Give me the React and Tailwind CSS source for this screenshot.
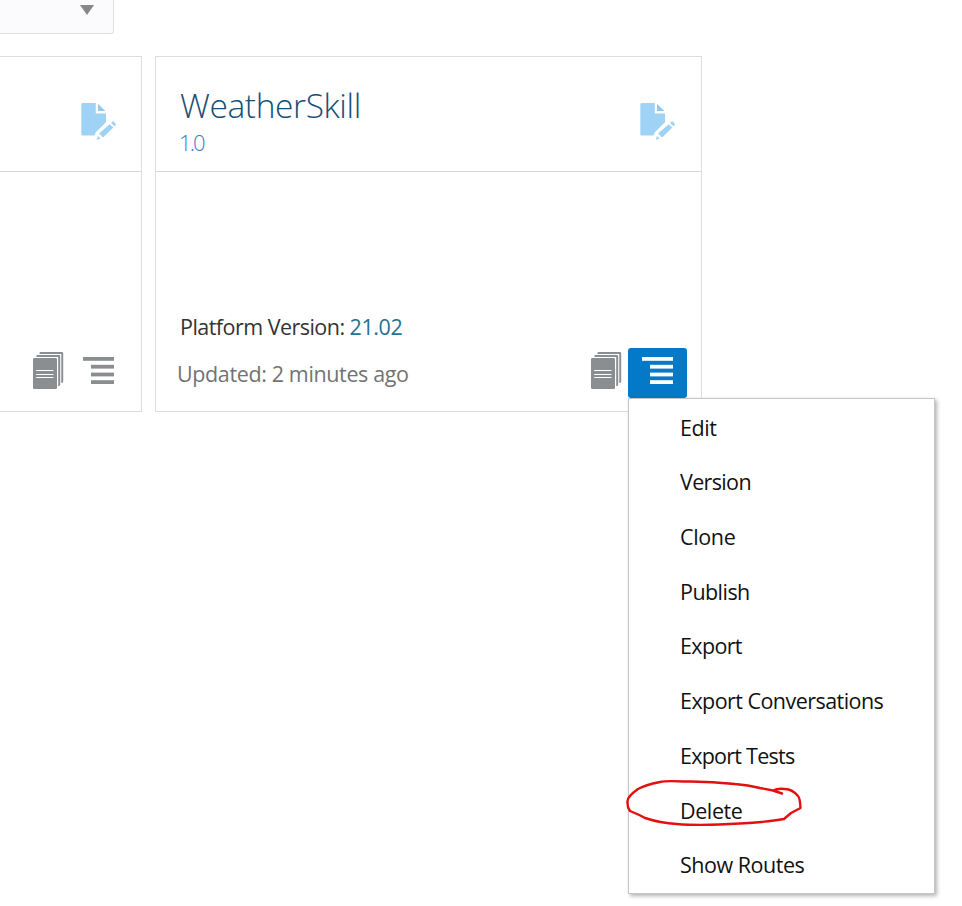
const FONT = "font-['Open_Sans','Noto_Sans',sans-serif]";

function DraftIcon() {
  return (
    <svg className="block h-[38px] w-[36px] shrink-0" viewBox="0 0 36 38" fill="#9fd3f5">
      <path d="M1.5 0H14.8V10.5H25V19.2L14.8 29.2L13.6 32.5H1.5Q.3 32.5 .3 31.3V1.2Q.3 0 1.5 0Z" />
      <path d="M17 .8L24.3 8H17Z" fill="#93c8ea" />
      <path d="M28.7 21.2L32.3 24.6L22.2 34.4L18 30.6Z" />
      <path d="M30 19.8L31.6 18.4Q32.1 18 32.6 18.5L34.8 20.8Q35.2 21.3 34.7 21.9L33.4 23.2Z" />
      <path d="M17 33L19.6 35.5L15.7 37Z" />
    </svg>
  );
}

function VersionsIcon() {
  return (
    <svg className="block h-[38px] w-[31px] shrink-0" viewBox="0 0 31 38">
      <g fill="#8a8e90">
        <path d="M6.5 .9Q6.5 0 7.5 0H29Q30.2 0 30.2 1.2V29.5Q30.2 31 28.3 31V1.9H6.5Z" />
        <path d="M3.4 3.9Q3.4 3 4.4 3H26Q27.2 3 27.2 4.2V32.8Q27.2 34.2 25.2 34.2V4.9H3.4Z" />
        <rect x="0" y="6" width="24" height="31" rx="1.2" />
      </g>
      <path d="M3.2 18.5H20.4M3.2 22.5H20.4M3.2 25.5H20.4" stroke="#fff" strokeWidth="1.2" />
    </svg>
  );
}

function MenuIcon() {
  return (
    <svg className="block h-[27px] w-[31px] shrink-0" viewBox="0 0 31 27" fill="currentColor">
      <rect x="0" y="0" width="31" height="3.8" />
      <rect x="8" y="7.8" width="23" height="3.8" />
      <rect x="8" y="15.6" width="23" height="3.8" />
      <rect x="8" y="23.2" width="23" height="3.8" />
    </svg>
  );
}

const items = [
  ["Edit", "tracking-[-0.45px]"],
  ["Version", "tracking-[-0.65px]"],
  ["Clone", "tracking-[-0.35px]"],
  ["Publish", "tracking-[-0.55px]"],
  ["Export", "tracking-[-0.65px]"],
  ["Export Conversations", "tracking-[-0.55px]"],
  ["Export Tests", "tracking-[-0.75px]"],
  ["Delete", "tracking-[-0.4px]"],
  ["Show Routes", "tracking-[-0.48px]"],
];

function ActionMenu() {
  return (
    <div className="absolute top-[50px] left-0 z-10 h-[496px] w-[307px] border border-[#c4c6c8] bg-white pt-[1.4px] shadow-[2px_2px_4px_rgba(0,0,0,0.3)]">
      <ul>
        {items.map(([label, tracking]) => (
          <li key={label} className="flex h-[54.7px] items-center pl-[51px] text-[21.5px] leading-[30px] whitespace-nowrap text-[#111]">
            <span className={tracking}>{label}</span>
          </li>
        ))}
      </ul>
      <svg className="pointer-events-none absolute top-[378px] left-[-7px] h-[54px] w-[184px]" viewBox="622 777 184 54" fill="none" stroke="#e60f0f" strokeWidth="2.4" strokeLinecap="round" strokeLinejoin="round">
        <path d="M782 793.5L773 790.5L760 788Q748 785 735 784Q708 781 684 781.5Q666 780.5 660 782Q645 785 638 789Q628 796 627.5 801Q627 807 630 811Q640 815 645 818Q660 823 677 824Q700 826 740 823.5Q768 822 784 819L791 813L800.5 808Q800 798 798 796Q792 789 785 789Q778 788 773 790.5" />
      </svg>
    </div>
  );
}

export default function App() {
  return (
    <main className={`h-[906px] w-[962px] overflow-hidden bg-white ${FONT}`}>
      <div className="flex h-[34px] w-[114px] justify-end rounded-br-[3px] border-r border-b border-[#dfe1e4] bg-[#fbfbfe] pt-[5px] pr-[19px]">
        <svg className="block h-[10px] w-[14px]" viewBox="0 0 14 10" fill="#84888a"><path d="M0 0H14L7 10Z" /></svg>
      </div>
      <div className="mt-[22px] flex gap-[13px]">
        <section className="flex h-[356px] w-[142px] flex-col border border-l-0 border-[#dcdee0]">
          <div className="flex h-[115px] justify-end border-b border-[#d4d6d8] pt-[46px] pr-[24px]">
            <DraftIcon />
          </div>
          <div className="flex flex-1 items-end justify-end pr-[27px] pb-[21px] text-[#8a8e90]">
            <VersionsIcon />
            <div className="ml-[19px] pb-[6px]"><MenuIcon /></div>
          </div>
        </section>
        <section className="flex h-[356px] w-[547px] flex-col border border-[#dcdee0]">
          <div className="flex h-[115px] justify-between border-b border-[#d4d6d8] pr-[25px] pl-[24px]">
            <div className="pt-[26px]">
              <h2 className="text-[33.5px] leading-[44px] font-[340] tracking-[-0.4px] text-[#145078]">WeatherSkill</h2>
              <p className="-ml-px text-[22px] leading-[30px] font-[340] tracking-[-1.9px] text-[#3b7fc4]">1.0</p>
            </div>
            <div className="pt-[46px]"><DraftIcon /></div>
          </div>
          <div className="flex flex-1 flex-col justify-end pl-[24px]">
            <p className="text-[21.5px] leading-[30px] text-[#333]">
              <span className="tracking-[-0.53px]">Platform Version: </span>
              <span className="tracking-[-0.4px] text-[#257191]">21.02</span>
            </p>
            <div className="mt-[6px] mb-[13px] flex h-[50px] pr-[14px]">
              <p className="-ml-[3px] flex-1 pt-[11px] text-[21.5px] leading-[30px] text-[#737373]"><span className="tracking-[-0.37px]">Updated: 2 minutes ago</span></p>
              <div className="mr-[6px] pt-[4px]"><VersionsIcon /></div>
              <div className="relative w-[59px]">
                <button className="flex h-[50px] w-[59px] rounded-[3px] bg-[#0379c8] pt-[9px] pl-[14px] text-white"><MenuIcon /></button>
                <ActionMenu />
              </div>
            </div>
          </div>
        </section>
      </div>
    </main>
  );
}
